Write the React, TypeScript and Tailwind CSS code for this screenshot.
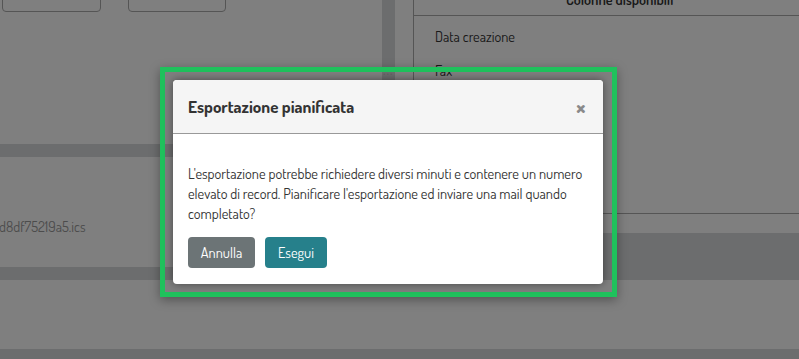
export default function App() {
  const font = { fontFamily: "Dosis, 'Roboto Condensed', sans-serif" };
  return (
    <div className="relative w-[799px] h-[359px] overflow-hidden bg-[#d9dbdd] text-[14.4px] text-[#333]" style={font}>
      {/* page */}
      <div className="flex flex-col gap-[13px]">
        <div className="flex items-start gap-[13px] h-[267px]">
          {/* left column */}
          <div className="w-[382px] flex flex-col gap-[13px]">
            <div className="h-[144px] bg-white flex flex-col">
              <div className="flex items-center -mt-[22px] ml-[2px]">
                <div className="w-[99px] h-[34px] border border-[#aaa] rounded-[4px] flex items-center px-[12px] text-[#555]">
                  01/01/2020
                </div>
                <div className="w-[27px] flex justify-center">
                  <svg width="12" height="12" viewBox="0 0 12 12">
                    <path d="M1 6h8M6 2l4 4-4 4" stroke="#222" strokeWidth="2.2" fill="none" />
                  </svg>
                </div>
                <div className="w-[98px] h-[34px] border border-[#aaa] rounded-[4px]" />
              </div>
            </div>
            <div className="h-[110px] bg-white flex items-center pt-[30px]">
              <span className="text-[#999] -ml-[1px]">d8df75219a5.ics</span>
            </div>
          </div>
          {/* right column */}
          <div className="relative flex-1 h-[233px] bg-white pl-[18px] flex flex-col">
            <div className="absolute left-[-12px] top-[70px] text-[8px] leading-none text-[#c8c8c8] tracking-[1px]">•••</div>
            <div className="h-[214px] border-l border-b border-[#aaa] flex flex-col">
              <div className="h-[16px] shrink-0 border-b border-[#aaa] pl-[152px] flex items-end pb-[6px]">
                <div className="leading-[20px] font-semibold whitespace-nowrap">Colonne disponibili</div>
              </div>
              <div className="pt-[4px]">
                <div className="h-[34px] flex items-center pl-[21px]">Data creazione</div>
                <div className="h-[34px] flex items-center pl-[21px]">Fax</div>
              </div>
            </div>
          </div>
        </div>
        <div className="h-[69px] bg-white" />
      </div>

      {/* backdrop */}
      <div className="absolute inset-0 bg-black/50" />

      {/* highlighted modal */}
      <div className="absolute left-[160px] top-[67px] w-[457px] h-[230px] border-[5px] border-[#1fc15c] p-[8px] shadow-[0_3px_10px_rgba(0,0,0,0.35)]">
        <div className="w-[430px] h-[204px] bg-white rounded-[4px] shadow-[0_0_9px_rgba(0,0,0,0.45)] flex flex-col">
          <div className="h-[54px] shrink-0 bg-[#f5f5f5] rounded-t-[4px] border-b border-[#999] flex items-center justify-between pl-[15px] pr-[17px]">
            <span className="text-[17px] font-bold text-[#333]">Esportazione pianificata</span>
            <span className="text-[25px] font-bold leading-none text-[#8a8a8a]">×</span>
          </div>
          <div className="pl-[15px] pt-[29px]">
            <p className="leading-[20px] text-[#333] w-[405px]">
              L'esportazione potrebbe richiedere diversi minuti e contenere un numero elevato di record. Pianificare l'esportazione ed inviare una mail quando completato?
            </p>
            <div className="flex gap-[10px] mt-[14px]">
              <button className="w-[67px] h-[31px] rounded-[4px] bg-[#6c7476] text-white">Annulla</button>
              <button className="w-[62px] h-[31px] rounded-[4px] bg-[#26808b] text-white">Esegui</button>
            </div>
          </div>
        </div>
      </div>
    </div>
  );
}
